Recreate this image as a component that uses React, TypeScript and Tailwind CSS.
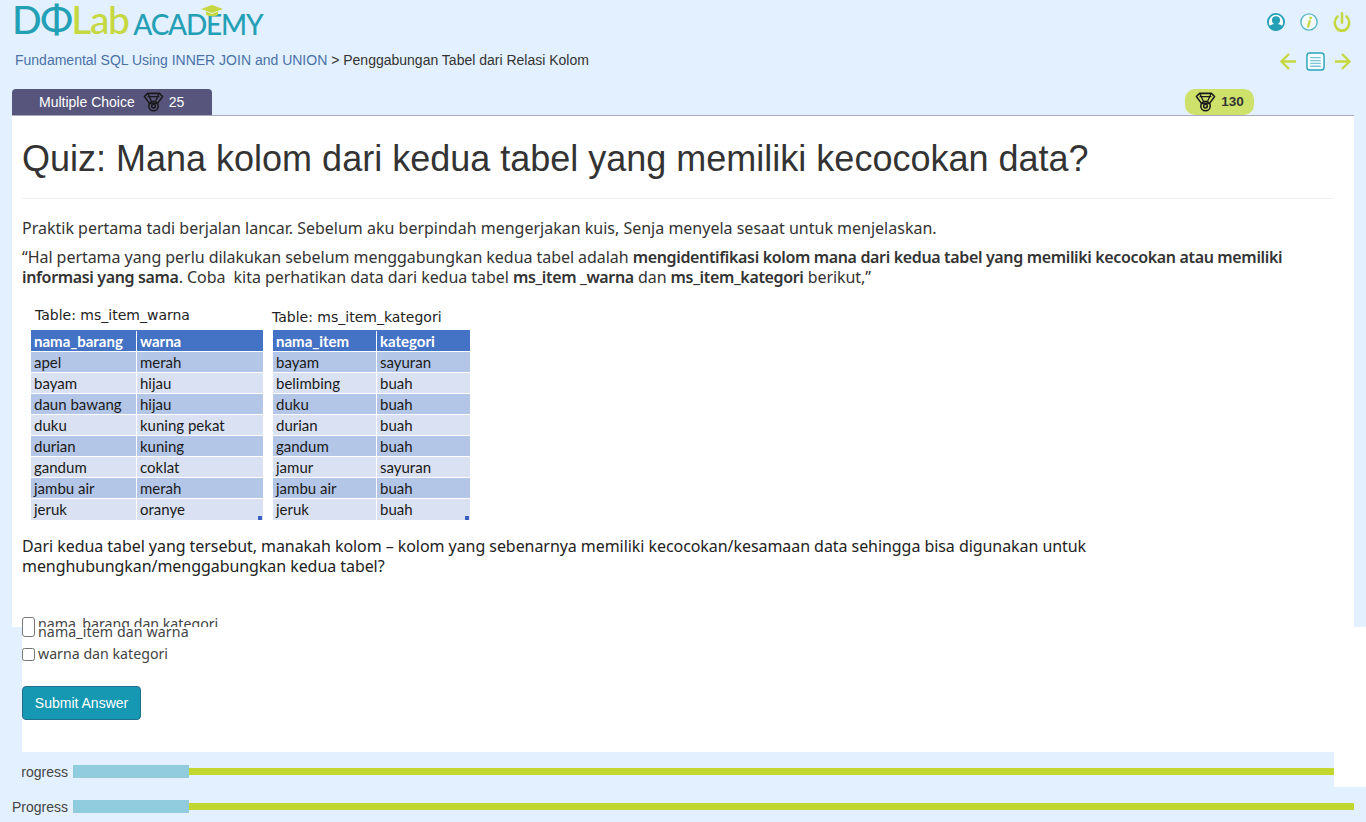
const Medal = ({ className = "" }: { className?: string }) => (
  <svg viewBox="0 0 22 22" className={className} fill="none" stroke="#1a1a1a" strokeWidth="1.7" strokeLinejoin="round">
    <path d="M1 5 L4.5 1.5 H17.5 L21 5 L15.5 12.5 H6.5 Z" />
    <path d="M4.5 5 H17.5 M5 2 L9 11 M17 2 L13 11" strokeWidth="1.4" />
    <circle cx="11" cy="15.5" r="5.2" />
    <circle cx="11" cy="15.5" r="2" />
  </svg>
);

const headers = [
  {
    title: "Table: ms_item_warna",
    w1: "w-[106px]",
    cols: ["nama_barang", "warna"],
    rows: [
      ["apel", "merah"],
      ["bayam", "hijau"],
      ["daun bawang", "hijau"],
      ["duku", "kuning pekat"],
      ["durian", "kuning"],
      ["gandum", "coklat"],
      ["jambu air", "merah"],
      ["jeruk", "oranye"],
    ],
  },
  {
    title: "Table: ms_item_kategori",
    w1: "w-[104px]",
    cols: ["nama_item", "kategori"],
    rows: [
      ["bayam", "sayuran"],
      ["belimbing", "buah"],
      ["duku", "buah"],
      ["durian", "buah"],
      ["gandum", "buah"],
      ["jamur", "sayuran"],
      ["jambu air", "buah"],
      ["jeruk", "buah"],
    ],
  },
];

function DataTable({ t, first }: { t: (typeof headers)[number]; first: boolean }) {
  return (
    <div className={first ? "w-[232px]" : "w-[197px]"}>
      <div
        className={
          first
            ? "h-[30px] pl-[4px] pt-[6px] text-[14px] leading-[18px] text-[#222] font-['DejaVu_Sans']"
            : "h-[30px] pt-[8px] -ml-[1px] text-[14px] leading-[18px] text-[#222] font-['DejaVu_Sans']"
        }
      >
        {t.title}
      </div>
      <div className="relative pb-[1px] font-['Lato'] text-[15px] leading-[20px] text-[#1a1a1a]">
        <div className="flex h-[21px] items-center bg-[#4472c4] font-bold text-white">
          <div className={`${t.w1} border-r border-white pl-[3px]`}>{t.cols[0]}</div>
          <div className="flex-1 pl-[3px]">{t.cols[1]}</div>
        </div>
        {t.rows.map((r, i) => (
          <div
            key={r[0]}
            className={
              i === 7
                ? "flex h-[22px] border-t border-white bg-[#d9e1f2]"
                : i % 2 === 0
                  ? "flex h-[21px] border-t border-white bg-[#b4c6e7]"
                  : "flex h-[21px] border-t border-white bg-[#d9e1f2]"
            }
          >
            <div className={`${t.w1} border-r border-white pl-[3px]`}>{r[0]}</div>
            <div className="flex-1 pl-[3px]">{r[1]}</div>
          </div>
        ))}
        <div className="absolute bottom-[1px] right-[1px] h-[4px] w-[4px] bg-[#3b5fc0]" />
      </div>
    </div>
  );
}

function Progress() {
  return (
    <div className="flex h-[13px] items-center">
      <span className="w-[61px] shrink-0 text-[14px] leading-[16px] text-[#444]">Progress</span>
      <div className="h-[13px] w-[116px] shrink-0 bg-[#90cbde]" />
      <div className="h-[7px] flex-1 bg-[#c1d72f]" />
    </div>
  );
}

export default function App() {
  return (
    <div className="flex h-[822px] w-full flex-col overflow-hidden bg-[#e3f0ff] font-['Liberation_Sans',sans-serif]">
      <header className="flex h-[89px] shrink-0 justify-between pl-[15px] pr-[15px]">
        <div>
          <div className="relative -ml-[3px] flex h-[46px] items-end whitespace-nowrap pb-[9px] font-['Lato']">
            <span className="text-[39px] leading-[36px] font-medium tracking-[-1.5px] text-[#23a0b5]">DΦ</span>
            <span className="text-[39px] leading-[36px] font-medium tracking-[-1.5px] text-[#c6d840]">Lab</span>
            <span className="ml-[5px] -mb-[1px] text-[28px] leading-[27px] font-medium tracking-[-1.2px] text-[#23a0b5]">ACADEMY</span>
            <svg viewBox="0 0 22 12" className="absolute left-[189px] top-[5px] h-[12px] w-[22px]">
              <path d="M0 4 L11 0 L22 4 L11 8 Z" fill="#c6d840" />
              <path d="M5 6.5 V10 Q11 12.5 17 10 V6.5 L11 9 Z" fill="#c6d840" />
            </svg>
          </div>
          <div className="mt-[6px] text-[14px] leading-[16px] text-[#333]">
            <span className="text-[#4a72a8]">Fundamental SQL Using INNER JOIN and UNION</span> &gt; Penggabungan Tabel dari Relasi Kolom
          </div>
        </div>
        <div className="flex flex-col items-end">
          <div className="mt-[12px] flex items-center gap-[15px]">
            <svg viewBox="0 0 20 20" className="h-[18px] w-[18px]">
              <circle cx="10" cy="10" r="9" fill="#fff" stroke="#23a0b5" strokeWidth="2" />
              <circle cx="10" cy="8" r="4.5" fill="#23a0b5" />
              <path d="M2 15 Q5 12 10 12 Q15 12 18 15 Q15 19.5 10 19.5 Q5 19.5 2 15 Z" fill="#23a0b5" />
            </svg>
            <svg viewBox="0 0 20 20" className="h-[18px] w-[18px]">
              <circle cx="10" cy="10" r="9" fill="#f4fbff" stroke="#5cb6c9" strokeWidth="1.6" />
              <circle cx="11.8" cy="5.5" r="1.6" fill="#c6d840" />
              <path d="M10.8 9 L9 15" stroke="#c6d840" strokeWidth="2.6" strokeLinecap="round" />
            </svg>
            <svg viewBox="0 0 20 20" className="h-[20px] w-[18px]" fill="none" stroke="#c6d840" strokeWidth="2.8" strokeLinecap="round" preserveAspectRatio="none">
              <path d="M5 4.5 A8 8 0 1 0 15 4.5" />
              <path d="M10 1.5 V10.5" />
            </svg>
          </div>
          <div className="mt-[20px] flex items-center gap-[10px]">
            <svg viewBox="0 0 16 17" className="h-[17px] w-[16px]" fill="none" stroke="#c6d840" strokeWidth="2.4">
              <path d="M16 8.5 H2 M9 1 L1.5 8.5 L9 16" />
            </svg>
            <svg viewBox="0 0 20 20" className="h-[19px] w-[19px]" fill="#f4fbff" stroke="#2ba3b8" strokeWidth="1.5">
              <rect x="1" y="1" width="18" height="18" rx="3" />
              <path d="M4.5 6 H15.5 M4.5 9 H15.5 M4.5 12 H15.5 M4.5 15 H15.5" stroke="#7cc4d4" strokeWidth="1.4" />
            </svg>
            <svg viewBox="0 0 16 17" className="h-[17px] w-[16px]" fill="none" stroke="#c6d840" strokeWidth="2.4">
              <path d="M0 8.5 H14 M7 1 L14.5 8.5 L7 16" />
            </svg>
          </div>
        </div>
      </header>

      <div className="flex h-[26px] shrink-0 justify-between pl-[12px] pr-[112px]">
        <div className="flex w-[200px] items-center rounded-t-[4px] bg-[#58557c] pl-[27px] text-[14px] text-white">
          <span>Multiple Choice</span>
          <Medal className="ml-[8px] h-[20px] w-[21px]" />
          <span className="ml-[5px]">25</span>
        </div>
        <div className="flex w-[69px] items-center justify-center gap-[5px] rounded-[10px] bg-[#cee16a] text-[14px] font-bold text-[#333]">
          <Medal className="h-[20px] w-[21px]" />
          <span className="text-[13.5px]">130</span>
        </div>
      </div>

      <main className="mx-[12px] h-[512px] shrink-0 overflow-hidden border-t border-[#aaaabf] bg-white px-[10px]">
        <h1 className="mr-[10px] h-[83px] border-b border-[#eeeeee] pt-[23px] text-[36px] leading-[40px] font-normal text-[#333]">
          Quiz: Mana kolom dari kedua tabel yang memiliki kecocokan data?
        </h1>
        <div className="pt-[19px] font-['Noto_Sans'] text-[16px] leading-[20px] text-[#333]">
          <p>Praktik pertama tadi berjalan lancar. Sebelum aku berpindah mengerjakan kuis, Senja menyela sesaat untuk menjelaskan.</p>
          <p className="mt-[9px] w-[1290px] tracking-[-0.05px]">
            “Hal pertama yang perlu dilakukan sebelum menggabungkan kedua tabel adalah <b className="font-semibold tracking-[-0.35px]">mengidentifikasi kolom mana dari kedua tabel yang memiliki kecocokan atau memiliki informasi yang sama</b>. Coba &nbsp;kita perhatikan data dari kedua tabel <b className="font-semibold tracking-[-0.35px]">ms_item _warna</b> dan <b className="font-semibold tracking-[-0.35px]">ms_item_kategori</b> berikut,”
          </p>
          <div className="mt-[13px] flex gap-[10px] pl-[9px]">
            {headers.map((t, i) => (
              <DataTable key={t.title} t={t} first={i === 0} />
            ))}
          </div>
          <p className="mt-[15px] w-[1110px] tracking-[-0.06px] text-[#222]">
            Dari kedua tabel yang tersebut, manakah kolom – kolom yang sebenarnya memiliki kecocokan/kesamaan data sehingga bisa digunakan untuk menghubungkan/menggabungkan kedua tabel?
          </p>
          <div className="mt-[38px] pl-[16px] text-[14.2px] leading-[20px] text-[#444]">
            nama_barang dan kategori
          </div>
        </div>
      </main>

      <section className="relative ml-[22px] h-[160px] shrink-0 bg-white">
        <input
          type="checkbox"
          className="absolute -top-[10px] left-0 m-0 h-[20px] w-[13px] appearance-none rounded-[3px] border border-[#767676] bg-white"
        />
        <div className="h-[125px] font-['Noto_Sans'] text-[14.2px] text-[#444]">
          <div className="h-[16px] pl-[16px] leading-[10px] tracking-[0.1px]">nama_item dan warna</div>
          <label className="mt-[1px] flex h-[20px] items-center gap-[3px]">
            <input type="checkbox" className="m-0 h-[13px] w-[13px]" />
            <span>warna dan kategori</span>
          </label>
          <button className="mt-[22px] h-[34px] w-[119px] rounded-[4px] border border-[#1f6f8f] bg-[#1697b2] font-['Liberation_Sans'] text-[14px] text-white">
            Submit Answer
          </button>
        </div>
        <div className="mr-[32px] h-[35px] overflow-hidden bg-[#e3f0ff] pt-[13px]">
          <div className="-ml-[10px]">
            <Progress />
          </div>
        </div>
      </section>

      <div className="ml-[12px] mr-[12px] mt-[13px]">
        <Progress />
      </div>
    </div>
  );
}
